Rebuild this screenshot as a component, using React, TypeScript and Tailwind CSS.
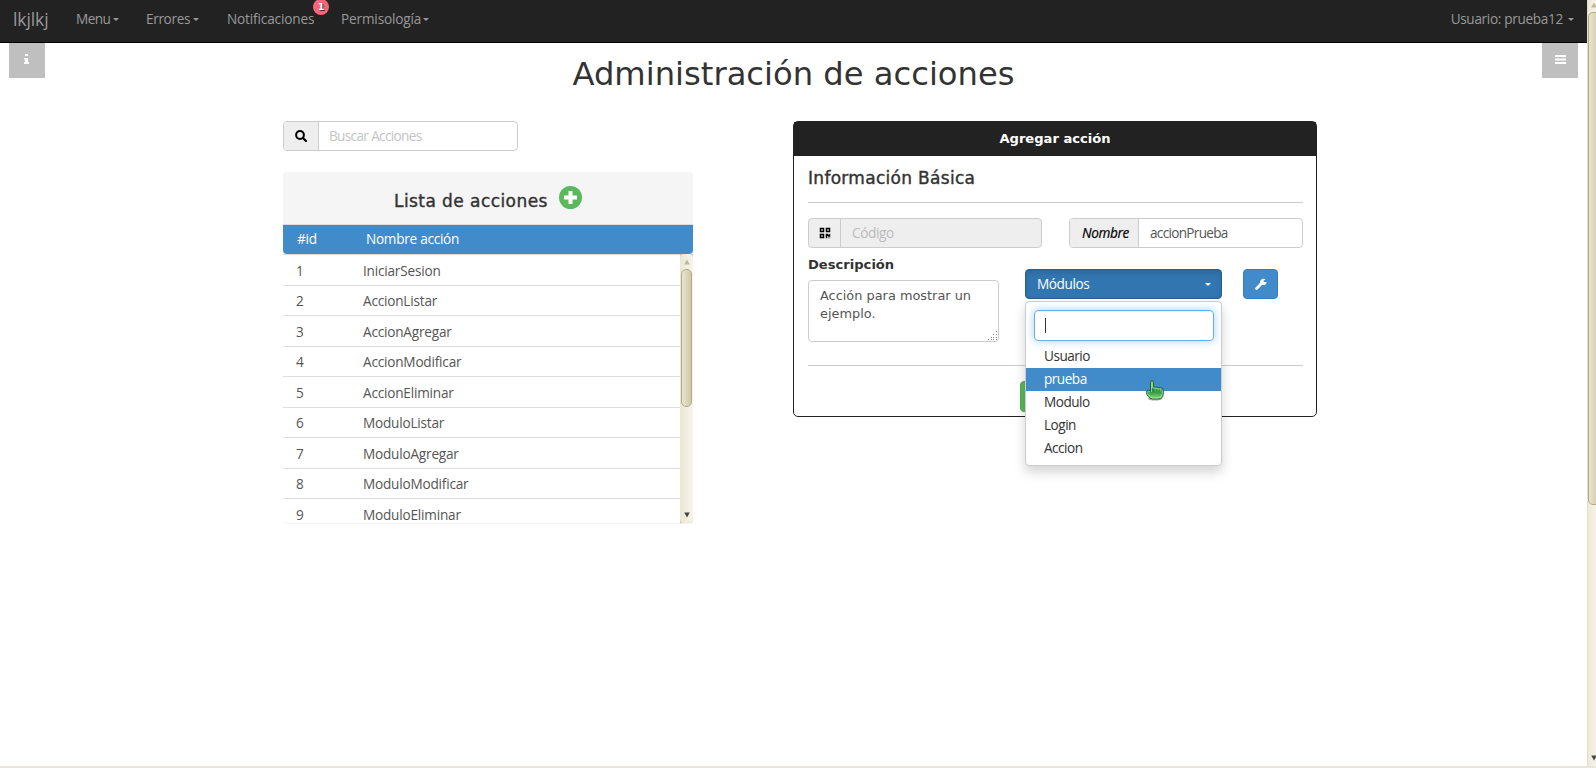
import React from 'react';
import { FaQrcode } from 'react-icons/fa';

const acciones = [
  'IniciarSesion',
  'AccionListar',
  'AccionAgregar',
  'AccionModificar',
  'AccionEliminar',
  'ModuloListar',
  'ModuloAgregar',
  'ModuloModificar',
  'ModuloEliminar',
];

function Caret({ className = '' }: { className?: string }) {
  return (
    <svg width="6" height="3" viewBox="0 0 6 3" className={className} fill="currentColor">
      <path d="M0 0h6L3 3z" />
    </svg>
  );
}

function Arrow({ up = false, className = '' }: { up?: boolean; className?: string }) {
  return (
    <svg width="6" height="6" viewBox="0 0 6 6" className={className} fill="currentColor">
      <path d={up ? 'M3 0.5L5.8 5.5H0.2z' : 'M0.2 0.5H5.8L3 5.5z'} />
    </svg>
  );
}

function Navbar() {
  return (
    <nav className="flex h-[43px] items-start justify-between border-b border-black bg-[#222] pt-[9px] text-[13.6px] leading-5 tracking-[-0.22px] text-[#999]">
      <div className="flex">
        <span className="ml-[13px] w-[63px] text-[17.5px] tracking-[-0.1px]">lkjlkj</span>
        <span className="flex w-[70px] items-center"><span className="w-[37px] tracking-[-0.55px]">Menu</span><Caret className="mt-px" /></span>
        <span className="flex w-[81px] items-center"><span className="w-[47px] tracking-[-0.35px]">Errores</span><Caret className="mt-px" /></span>
        <span className="relative w-[114px] tracking-[-0.15px]">
          Notificaciones
          <span className="absolute left-[86px] top-[-10px] flex size-4 items-center justify-center rounded-full bg-[#f5657a] font-['DejaVu_Sans'] text-[9px] font-bold text-white [text-shadow:1px_1px_0_#333]">1</span>
        </span>
        <span className="flex items-center"><span className="w-[82px] tracking-[-0.15px]">Permisología</span><Caret className="mt-px" /></span>
      </div>
      <span className="mr-[13px] flex items-center"><span className="tracking-[-0.32px]">Usuario: prueba12</span><Caret className="ml-[5px] mt-px" /></span>
    </nav>
  );
}

function ListaAcciones() {
  return (
    <section className="w-[410px]">
      <div className="flex h-[30px] w-[235px] overflow-hidden rounded border border-[#ccc] text-[13.6px]">
        <span className="flex w-[35px] items-center justify-center border-r border-[#ccc] bg-[#eee] pr-px text-black">
          <svg width="12" height="12" viewBox="0 0 12 12" fill="none" stroke="currentColor" strokeWidth="2">
            <circle cx="5" cy="5" r="3.9" />
            <path d="M8 8L11 11" strokeLinecap="round" strokeWidth="2.2" />
          </svg>
        </span>
        <span className="flex items-center pl-[10px] tracking-[-0.66px] text-[#c4c4c4]">Buscar Acciones</span>
      </div>
      <div className="mt-[21px] h-[351px] overflow-hidden rounded shadow-[0_1px_1px_rgba(0,0,0,0.05)]">
        <div className="flex h-[53px] items-center border-b border-[#ddd] bg-[#f5f5f5] pl-[111px]">
          <h2 className="mt-[8px] w-[165px] whitespace-nowrap font-['DejaVu_Sans'] text-[17px] tracking-[0.43px] text-[#333] [-webkit-text-stroke:0.4px_#333]">Lista de acciones</h2>
          <span className="mb-px flex size-[23px] items-center justify-center rounded-full bg-[#5cb85c] text-white">
            <svg width="13" height="13" viewBox="0 0 13 13" stroke="currentColor" strokeWidth="4"><path d="M6.5 0v13M0 6.5h13" /></svg>
          </span>
        </div>
        <div className="flex h-[29px] items-center rounded-b bg-[#428bca] pl-[14px] text-[13.6px] tracking-[-0.27px] text-white">
          <span className="w-[69px]">#id</span>
          <span>Nombre acción</span>
        </div>
        <div className="flex h-[269px]">
          <div className="w-[397px] overflow-hidden text-[13.6px] tracking-[-0.2px] text-[#555]">
            {acciones.map((a, i) => (
              <div key={a} className="flex h-[30.5px] items-center border-t border-[#ddd] pl-[13px] pt-[2px]">
                <span className="w-[67px]">{i + 1}</span>
                <span>{a}</span>
              </div>
            ))}
          </div>
          <div className="w-[13px] bg-[#d0c8a4]">
            <div className="flex h-full flex-col items-center rounded bg-linear-to-r from-[#ebe7d4] to-[#f7f5ec]">
              <Arrow up className="mt-[5px] shrink-0 text-[#c0b98f]" />
              <div className="mt-[4px] h-[138px] w-[11px] rounded-[5px] border border-[#b5ab80] bg-linear-to-r from-[#e8e4cf] to-[#d0c9a8]" />
              <Arrow className="mb-[5px] mt-auto shrink-0 text-[#444]" />
            </div>
          </div>
        </div>
      </div>
    </section>
  );
}

function HandCursor() {
  return (
    <svg width="18" height="21" viewBox="0 0 18 21" className="absolute left-[120px] top-[78px]">
      <defs>
        <linearGradient id="hand" x1="0" y1="0" x2="0" y2="1">
          <stop offset="0" stopColor="#43a35a" />
          <stop offset="0.55" stopColor="#1f8a3a" />
          <stop offset="1" stopColor="#8fe07a" />
        </linearGradient>
      </defs>
      <ellipse cx="9" cy="18.8" rx="7" ry="1.8" fill="#000" opacity="0.35" />
      <path d="M4.5 10V2.2Q4.6.7 6 .7T7.5 2.2V6.8L16 8Q17.3 8.6 17.2 10.5V14.5Q16.8 18.8 12.5 18.9H6.5Q4 18.7 2.4 16.5L.8 14.5V11Q1 10.3 2.2 10.2Q3.6 10.2 4.5 11Z" fill="url(#hand)" stroke="#176b2c" />
      <path d="M5.5 12V2.2Q6 1.2 6.5 2.2V7.8L15.6 9Q16.2 9.5 16.2 11V14.2Q15.7 17.7 12.5 17.9H6.7Q4.6 17.7 3.3 16L1.8 14V11.5Q2.5 10.8 4 12" fill="none" stroke="#b9e8b9" strokeWidth="0.7" />
      <path d="M9.2 8V11.5M12 8.4V11.5M14.4 8.8V11.5" stroke="#a5dfaa" strokeWidth="0.7" />
    </svg>
  );
}

function ModuloSelect() {
  return (
    <div className="relative w-[197px]">
      <div className="flex h-[30px] items-center justify-between rounded border border-[#285e8e] bg-[#3276b1] pl-[11px] pr-[10px] text-[13.6px] text-white shadow-[inset_0_3px_5px_rgba(0,0,0,0.125)]">
        <span className="tracking-[-0.4px]">Módulos</span>
        <Caret />
      </div>
      <div className="absolute left-0 top-[32px] h-[165px] w-[197px] rounded border border-[#ccc] bg-white pt-[8px] text-[13.6px] tracking-[-0.5px] text-[#333] shadow-[0_6px_12px_rgba(0,0,0,0.175)]">
        <div className="mb-[4px] ml-[8px] mr-[7px] flex h-[31px] items-center rounded border border-[#66afe9] pl-[10px] shadow-[inset_0_1px_1px_rgba(0,0,0,0.075),0_0_8px_rgba(102,175,233,0.6)]">
          <span className="h-[15px] w-px bg-[#333]" />
        </div>
        {['Usuario', 'prueba', 'Modulo', 'Login', 'Accion'].map((m) => (
          <div key={m} className={m === 'prueba' ? 'flex h-[23px] items-center bg-[#428bca] pl-[18px] text-white' : 'flex h-[23px] items-center pl-[18px]'}>{m}</div>
        ))}
        <HandCursor />
      </div>
    </div>
  );
}

function AgregarAccion() {
  return (
    <section className="h-[296px] w-[524px] rounded-[5px] border border-[#222]">
      <div className="flex h-[34px] items-center justify-center bg-[#222] font-['DejaVu_Sans'] text-[13.1px] font-bold text-white">Agregar acción</div>
      <div className="pl-[14px] pr-[13px]">
        <h3 className="flex h-[47px] items-center border-b border-[#ccc] font-['DejaVu_Sans'] text-[17px] tracking-[0.3px] text-[#333] [-webkit-text-stroke:0.4px_#333]">Información Básica</h3>
        <div className="mt-[15px] flex justify-between text-[13.6px]">
          <div className="flex h-[30px] w-[234px] rounded border border-[#ccc] bg-[#eee]">
            <span className="flex w-[32px] items-center justify-center border-r border-[#ccc] text-[12px] text-black"><FaQrcode /></span>
            <span className="flex items-center pl-[11px] tracking-[-0.35px] text-[#bbb]">Código</span>
          </div>
          <div className="flex h-[30px] w-[234px] overflow-hidden rounded border border-[#ccc] text-[#555]">
            <span className="flex w-[69px] items-center border-r border-[#ccc] bg-[#eee] pl-[12px] italic tracking-[-0.35px] text-black [-webkit-text-stroke:0.2px_#000]">Nombre</span>
            <span className="flex items-center pl-[11px] tracking-[-0.7px]">accionPrueba</span>
          </div>
        </div>
        <div className="flex h-[118px] border-b border-[#ccc]">
          <div className="w-[191px] pt-[7px] font-['DejaVu_Sans']">
            <div className="h-[25px] text-[13.1px] font-bold leading-[20px] text-[#333]">Descripción</div>
            <div className="relative h-[62px] whitespace-nowrap rounded border border-[#ccc] px-[11px] pt-[6px] text-[12.9px] leading-[18px] text-[#555]">
              Acción para mostrar un<br />ejemplo.
              <svg width="10" height="10" viewBox="0 0 10 10" className="absolute bottom-0 right-0" fill="#888">
                <path d="M8 0h1v1H8zM8 3h1v1H8zM5 3h1v1H5zM8 6h1v1H8zM5 6h1v1H5zM3 6h1v1H3zM8 8h1v1H8zM5 8h1v1H5zM3 8h1v1H3zM0 8h1v1H0z" />
              </svg>
            </div>
          </div>
          <div className="ml-[26px] mt-[21px] flex h-[30px] gap-[21px]">
            <ModuloSelect />
            <span className="flex w-[35px] items-center justify-center rounded border border-[#357ebd] bg-[#428bca] text-white">
              <svg width="12" height="12" viewBox="0 0 12 12" fill="none" stroke="currentColor">
                <path d="M1.6 10.4L6.4 5.6" strokeWidth="2.8" strokeLinecap="round" />
                <path d="M9.6 1.6A2.6 2.6 0 1 0 10.9 4.6L8.7 4.4L7.8 3.5Z" strokeWidth="1.2" fill="currentColor" />
                <path d="M11.6 1.2L8.8 2.8L9.3 3.6L11.8 3Z" fill="#428bca" stroke="#428bca" strokeWidth="0.6" />
              </svg>
            </span>
          </div>
        </div>
        <div className="ml-[212px] mt-[15px] h-[31px] w-[70px] rounded border border-[#4cae4c] bg-[#5cb85c]" />
      </div>
    </section>
  );
}

export default function App() {
  return (
    <div className="flex h-[768px] flex-col overflow-hidden bg-white font-['Open_Sans',sans-serif]">
      <div className="flex h-[766px]">
        <main className="w-[1587px]">
          <Navbar />
          <div className="flex h-[78px] justify-between px-[9px]">
            <span className="flex h-[35px] w-[36px] items-center justify-center bg-[#bfbfbf] pb-[3px] pr-[2px] text-white">
              <svg width="5" height="10" viewBox="0 0 5 10" fill="currentColor"><path d="M1 0h3v2H1zM0 4h4v4h1v2H0V8h1V5.5H0z" /></svg>
            </span>
            <h1 className="mt-[10px] font-['DejaVu_Sans'] text-[32.2px] leading-[42px] text-[#333]">Administración de acciones</h1>
            <span className="flex h-[35px] w-[36px] items-center justify-center bg-[#bfbfbf] pb-[2px] pl-px text-white">
              <svg width="11" height="9" viewBox="0 0 11 9" fill="currentColor"><path d="M0 0h11v2H0zM0 3.5h11v2H0zM0 7h11v2H0z" /></svg>
            </span>
          </div>
          <div className="flex gap-[100px] pl-[283px]">
            <ListaAcciones />
            <AgregarAccion />
          </div>
        </main>
        <aside className="flex w-[9px] flex-col overflow-hidden border-l border-[#e2dfcd] bg-linear-to-r from-[#edeadb] to-[#f5f3e8]">
          <Arrow up className="ml-[3px] mt-[2px] shrink-0 text-[#c0b98f]" />
          <div className="mt-[4px] h-[493px] w-[13px] shrink-0 rounded-[5px] border border-[#b5ab80] bg-linear-to-r from-[#e8e4cf] to-[#d0c9a8]" />
          <Arrow className="mb-[5px] ml-[3px] mt-auto shrink-0 text-[#444]" />
        </aside>
      </div>
      <div className="h-[2px] bg-[#e9e6d8]" />
    </div>
  );
}
